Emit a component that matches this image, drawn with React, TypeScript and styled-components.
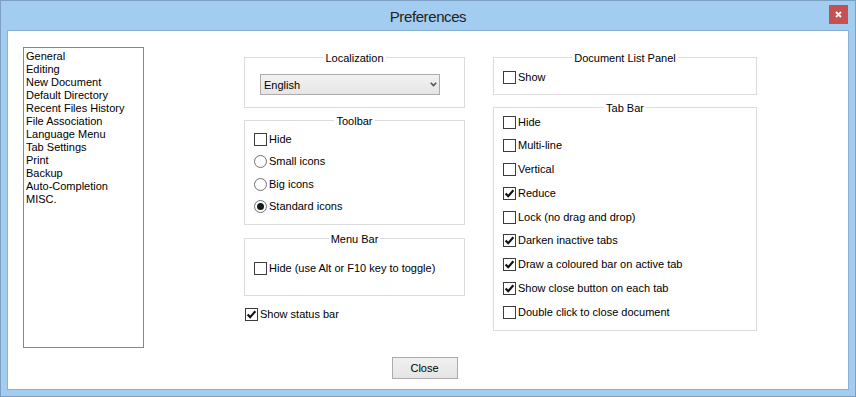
import React from "react";
import styled, { createGlobalStyle } from "styled-components";

const GlobalStyle = createGlobalStyle`
    html, body {
        margin: 0;
        padding: 0;
        background: #ffffff;
        overflow: hidden;
    }
    * {
        box-sizing: border-box;
    }
`;

const categories = [
    "General",
    "Editing",
    "New Document",
    "Default Directory",
    "Recent Files History",
    "File Association",
    "Language Menu",
    "Tab Settings",
    "Print",
    "Backup",
    "Auto-Completion",
    "MISC.",
];

const toolbarOptions = [
    { kind: "check", label: "Hide", on: false },
    { kind: "radio", label: "Small icons", on: false },
    { kind: "radio", label: "Big icons", on: false },
    { kind: "radio", label: "Standard icons", on: true },
];

const tabBarOptions = [
    { label: "Hide", on: false },
    { label: "Multi-line", on: false },
    { label: "Vertical", on: false },
    { label: "Reduce", on: true },
    { label: "Lock (no drag and drop)", on: false },
    { label: "Darken inactive tabs", on: true },
    { label: "Draw a coloured bar on active tab", on: true },
    { label: "Show close button on each tab", on: true },
    { label: "Double click to close document", on: false },
];

const CheckBox: React.FC<{ checked?: boolean }> = ({ checked }) => (
    <Box>
        {checked && (
            <svg width="11" height="11" viewBox="0 0 11 11">
                <path
                    d="M1.6 5.4 L4.2 8.1 L9.4 2.2"
                    fill="none"
                    stroke="#111"
                    strokeWidth="2.1"
                />
            </svg>
        )}
    </Box>
);

const Radio: React.FC<{ checked?: boolean }> = ({ checked }) => (
    <RadioCircle>{checked && <RadioDot />}</RadioCircle>
);

const Preferences: React.FC = () => {
    return (
        <Window>
            <TitleBar>
                <span />
                <Title>Preferences</Title>
                <CloseX>
                    <svg width="7" height="7" viewBox="0 0 7 7">
                        <path d="M1 1 L6 6 M6 1 L1 6" stroke="#fff" strokeWidth="1.8" />
                    </svg>
                </CloseX>
            </TitleBar>
            <Content>
                <Body>
                    <ListBox>
                        {categories.map((c) => (
                            <ListItem key={c}>{c}</ListItem>
                        ))}
                    </ListBox>

                    <MiddleColumn>
                        <Group height={51}>
                            <Legend>Localization</Legend>
                            <Select>
                                <span>English</span>
                                <svg width="7" height="5" viewBox="0 0 7 5">
                                    <path d="M0.8 0.8 L3.5 3.6 L6.2 0.8" fill="none" stroke="#555" strokeWidth="1.6" />
                                </svg>
                            </Select>
                        </Group>

                        <Group height={105} spacing={12}>
                            <Legend>Toolbar</Legend>
                            <OptionList top={3} gap={6.6}>
                                {toolbarOptions.map((o) => (
                                    <Option key={o.label}>
                                        {o.kind === "check" ? (
                                            <CheckBox checked={o.on} />
                                        ) : (
                                            <Radio checked={o.on} />
                                        )}
                                        <OptionLabel>{o.label}</OptionLabel>
                                    </Option>
                                ))}
                            </OptionList>
                        </Group>

                        <Group height={58} spacing={13}>
                            <Legend>Menu Bar</Legend>
                            <OptionList top={14} gap={0}>
                                <Option>
                                    <CheckBox />
                                    <OptionLabel>Hide (use Alt or F10 key to toggle)</OptionLabel>
                                </Option>
                            </OptionList>
                        </Group>

                        <StatusRow>
                            <CheckBox checked />
                            <OptionLabel>Show status bar</OptionLabel>
                        </StatusRow>
                    </MiddleColumn>

                    <RightColumn>
                        <Group height={38}>
                            <Legend>Document List Panel</Legend>
                            <OptionList top={4} gap={0}>
                                <Option>
                                    <CheckBox />
                                    <OptionLabel>Show</OptionLabel>
                                </Option>
                            </OptionList>
                        </Group>

                        <Group height={224} spacing={12}>
                            <Legend>Tab Bar</Legend>
                            <OptionList top={-1} gap={7.75}>
                                {tabBarOptions.map((o) => (
                                    <Option key={o.label}>
                                        <CheckBox checked={o.on} />
                                        <OptionLabel>{o.label}</OptionLabel>
                                    </Option>
                                ))}
                            </OptionList>
                        </Group>
                    </RightColumn>
                </Body>

                <Footer>
                    <Button>Close</Button>
                </Footer>
            </Content>
        </Window>
    );
};

const Window = styled.div`
    width: 856px;
    height: 397px;
    border: 1px solid #7c9fc2;
    background: #a3cdf0;
    display: flex;
    flex-direction: column;
    font-family: "Liberation Sans", Arial, sans-serif;
    font-size: 11px;
    color: #000;
`;

const TitleBar = styled.div`
    height: 29px;
    flex-shrink: 0;
    display: grid;
    grid-template-columns: 1fr auto 1fr;
    align-items: center;
`;

const Title = styled.div`
    font-size: 15px;
    letter-spacing: -0.4px;
    color: #222;
    padding-top: 1px;
`;

const CloseX = styled.div`
    justify-self: end;
    align-self: start;
    margin-top: 4px;
    margin-right: 7px;
    width: 19px;
    height: 19px;
    background: #c75050;
    display: flex;
    align-items: center;
    justify-content: center;
`;

const Content = styled.div`
    margin: 0 6px;
    height: 360px;
    border: 1px solid #8bb0d4;
    background: #fff;
    display: flex;
    flex-direction: column;
`;

const Body = styled.div`
    display: flex;
    align-items: flex-start;
    height: 317px;
`;

const ListBox = styled.div`
    margin: 16px 0 0 15px;
    width: 121px;
    height: 301px;
    border: 1px solid #828790;
    padding: 2px 0 0 2px;
    flex-shrink: 0;
`;

const ListItem = styled.div`
    height: 13px;
    line-height: 13px;
    white-space: nowrap;
`;

const MiddleColumn = styled.div`
    margin: 26px 0 0 100px;
    width: 221px;
    display: flex;
    flex-direction: column;
`;

const RightColumn = styled.div`
    margin: 26px 0 0 28px;
    width: 264px;
    display: flex;
    flex-direction: column;
`;

const Group = styled.div<{ height: number; spacing?: number }>`
    height: ${({ height }) => height}px;
    margin-top: ${({ spacing }) => spacing ?? 0}px;
    border: 1px solid #dcdcdc;
    display: flex;
    flex-direction: column;
`;

const Legend = styled.div`
    margin: -6px auto 0;
    padding: 0 2px;
    height: 13px;
    line-height: 13px;
    background: #fff;
    white-space: nowrap;
`;

const Select = styled.div`
    margin: 9px 0 0 15px;
    width: 180px;
    height: 21px;
    border: 1px solid #acacac;
    background: linear-gradient(#f2f2f2, #e5e5e5);
    display: flex;
    align-items: center;
    justify-content: space-between;
    padding: 0 2px 0 3px;
`;

const OptionList = styled.div<{ top: number; gap: number }>`
    margin-top: ${({ top }) => top}px;
    padding-left: 9px;
    display: flex;
    flex-direction: column;
    gap: ${({ gap }) => gap}px;
`;

const Option = styled.div`
    height: 16px;
    display: flex;
    align-items: center;
    gap: 2px;
`;

const StatusRow = styled(Option)`
    margin: 10px 0 0 1px;
`;

const OptionLabel = styled.span`
    white-space: nowrap;
    line-height: 13px;
`;

const Box = styled.div`
    width: 13px;
    height: 13px;
    border: 1px solid #3c3c3c;
    background: #fff;
    display: flex;
    align-items: center;
    justify-content: center;
    flex-shrink: 0;
`;

const RadioCircle = styled.div`
    width: 13px;
    height: 13px;
    border-radius: 50%;
    border: 1px solid #707070;
    background: #fff;
    display: flex;
    align-items: center;
    justify-content: center;
    flex-shrink: 0;
`;

const RadioDot = styled.div`
    width: 7px;
    height: 7px;
    border-radius: 50%;
    background: #1a1a1a;
`;

const Footer = styled.div`
    display: flex;
    justify-content: center;
    padding: 9px 7px 0 0;
`;

const Button = styled.button`
    width: 66px;
    height: 22px;
    border: 1px solid #acacac;
    background: linear-gradient(#f0f0f0, #e5e5e5);
    font-family: "Liberation Sans", Arial, sans-serif;
    font-size: 11px;
    color: #000;
    padding: 0;
`;

export default function App() {
    return (
        <>
            <GlobalStyle />
            <Preferences />
        </>
    );
}
